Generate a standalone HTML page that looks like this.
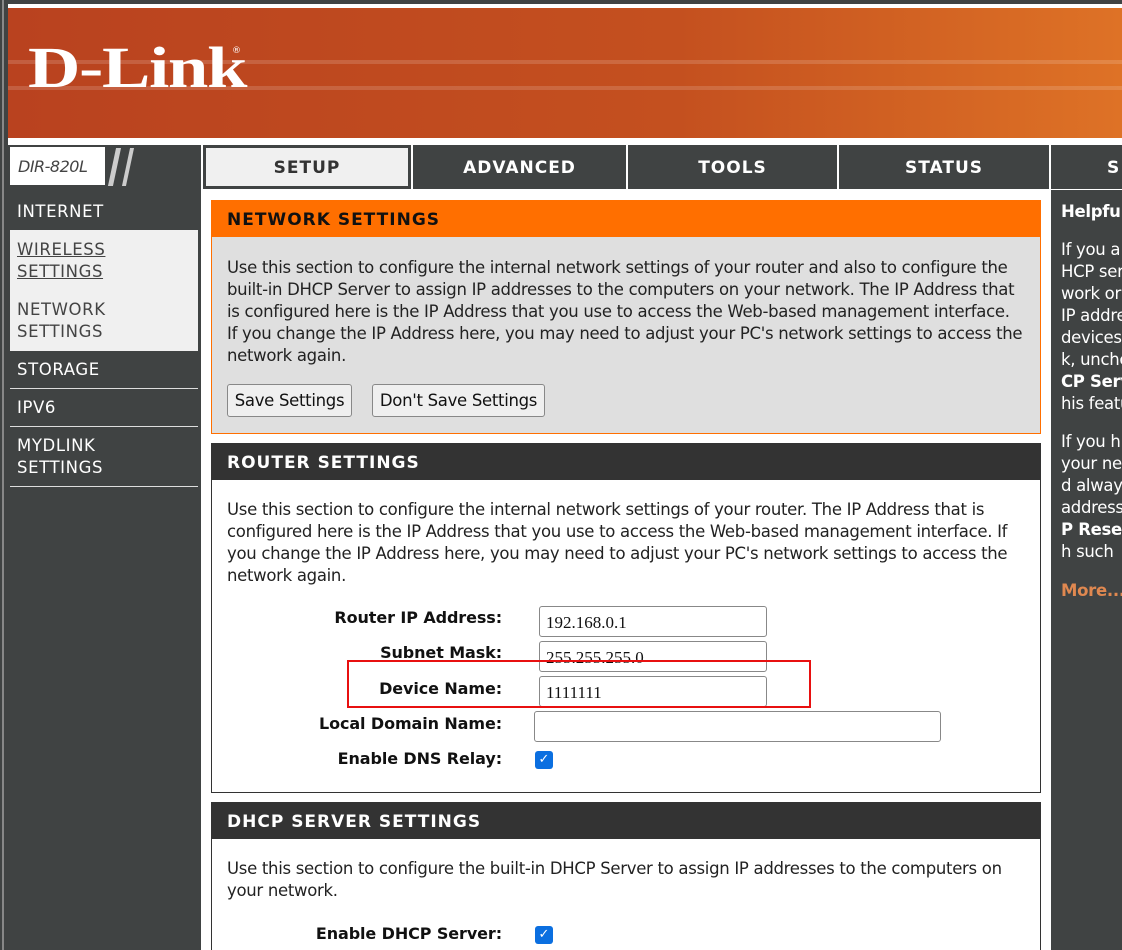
<!DOCTYPE html>
<html><head><style>
body{margin:0;width:1122px;height:950px;overflow:hidden;background:#fff;font-family:"DejaVu Sans","Liberation Sans",sans-serif;position:relative}
div,span{position:absolute;box-sizing:border-box}
.p{font-size:16.5px;line-height:22px;color:#222;white-space:nowrap;letter-spacing:-0.3px}
.tab{top:145px;height:44px;background:#404343;color:#fff;font-weight:bold;font-size:17px;letter-spacing:1px;text-align:center;line-height:46px}
.mi{left:10px;width:188px;color:#fff;font-size:16.5px;letter-spacing:0.6px;line-height:22px;padding-left:7px;border-bottom:1px solid #ddd}
.lbl{font-weight:bold;font-size:16px;color:#111;text-align:right;width:290px;left:212px;letter-spacing:-0.1px}
.inp{border:1px solid #888;border-radius:3px;height:31px;background:#fff;font-family:"Liberation Serif",serif;font-size:17px;line-height:31px;padding-left:6px;color:#111}
.cb{width:18px;height:18px;background:#0b6fe0;border-radius:3px;color:#fff;font-size:13px;line-height:18px;text-align:center;font-weight:bold}
.hd{font-weight:bold;font-size:17px;letter-spacing:1px;line-height:40px;padding-left:16px}
.btn{top:384px;height:33px;border:1px solid #888;border-radius:3px;background:#efefef;font-size:16.5px;line-height:31px;text-align:center;color:#111;letter-spacing:-0.3px}
.h{left:1061px;color:#fff;font-size:16.5px;line-height:22px;white-space:nowrap;letter-spacing:-0.3px}
</style></head><body>
<div style="left:0;top:0;width:1122px;height:4px;background:#404343"></div>
<div style="left:0;top:0;width:8px;height:950px;background:#404343"></div>
<div style="left:2px;top:0;width:2px;height:950px;background:#888"></div>
<div style="left:8px;top:8px;width:1114px;height:130px;background:linear-gradient(90deg,#b9421f 0%,#c4501f 60%,#de7226 100%)"></div>
<div style="left:8px;top:60px;width:1114px;height:4px;background:rgba(255,255,255,0.15)"></div>
<div style="left:8px;top:86px;width:1114px;height:4px;background:rgba(255,255,255,0.15)"></div>
<div style="left:28px;top:36px;color:#fff;font-family:'Liberation Serif',serif;font-weight:bold;font-size:58px;line-height:64px;letter-spacing:-1px;transform:scaleX(1.25);transform-origin:left center">D-Link</div>
<div style="left:232px;top:46px;color:#fff;font-size:9px">®</div>
<div style="left:8px;top:138px;width:1114px;height:7px;background:#fff"></div>
<div style="left:8px;top:145px;width:193px;height:805px;background:#404343"></div>
<div style="left:10px;top:147px;width:95px;height:38px;background:#fff;color:#444;font-style:italic;font-size:16px;line-height:40px;padding-left:8px;letter-spacing:-0.5px">DIR-820L</div>
<div style="left:112px;top:148px;width:5px;height:38px;background:#ccc;transform:skewX(-12deg)"></div>
<div style="left:126px;top:148px;width:4px;height:38px;background:#ccc;transform:skewX(-12deg)"></div>
<div class="tab" style="left:203px;width:208px;background:#404343;padding:3px"><div style="left:3px;top:3px;right:3px;bottom:3px;background:#f0f0f0;color:#333;line-height:40px">SETUP</div></div>
<div class="tab" style="left:413px;width:213px">ADVANCED</div>
<div class="tab" style="left:628px;width:209px">TOOLS</div>
<div class="tab" style="left:839px;width:210px">STATUS</div>
<div class="tab" style="left:1051px;width:71px;overflow:hidden;text-align:left;padding-left:56px">S</div>
<div class="mi" style="top:201px;border:none">INTERNET</div>
<div style="left:10px;top:230px;width:188px;height:121px;background:#f0f0f0"></div>
<div class="mi" style="top:239px;color:#444;text-decoration:underline;border:none">WIRELESS<br>SETTINGS</div>
<div class="mi" style="top:299px;color:#444;border:none">NETWORK<br>SETTINGS</div>
<div class="mi" style="top:359px;height:30px">STORAGE</div>
<div class="mi" style="top:397px;height:30px">IPV6</div>
<div class="mi" style="top:435px;height:52px">MYDLINK<br>SETTINGS</div>
<div style="left:1051px;top:190px;width:71px;height:760px;background:#404343"></div>
<div class="h" style="top:201px"><b>Helpful</b></div>
<div class="h" style="top:239px">If you a<br>HCP ser<br>work or<br>IP addre<br>devices<br>k, unche<br><b>CP Serv</b><br>his featu</div>
<div class="h" style="top:431px">If you h<br>your ne<br>d alway<br>address<br><b>P Rese</b><br>h such</div>
<div class="h" style="top:580px"><b style="color:#e08850">More...</b></div>
<div style="left:211px;top:200px;width:830px;height:234px;background:#dfdfdf;border:1px solid #ff6f00"></div>
<div class="hd" style="left:211px;top:200px;width:830px;height:37px;background:#ff6f00;color:#111">NETWORK SETTINGS</div>
<div class="p" style="left:227px;top:257px">Use this section to configure the internal network settings of your router and also to configure the<br>built-in DHCP Server to assign IP addresses to the computers on your network. The IP Address that<br>is configured here is the IP Address that you use to access the Web-based management interface.<br>If you change the IP Address here, you may need to adjust your PC's network settings to access the<br>network again.</div>
<div class="btn" style="left:227px;width:125px">Save Settings</div>
<div class="btn" style="left:372px;width:173px">Don't Save Settings</div>
<div style="left:211px;top:443px;width:830px;height:350px;border:1px solid #333"></div>
<div class="hd" style="left:211px;top:443px;width:830px;height:37px;background:#333;color:#fff">ROUTER SETTINGS</div>
<div class="p" style="left:227px;top:499px">Use this section to configure the internal network settings of your router. The IP Address that is<br>configured here is the IP Address that you use to access the Web-based management interface. If<br>you change the IP Address here, you may need to adjust your PC's network settings to access the<br>network again.</div>
<div class="lbl" style="top:608px">Router IP Address:</div>
<div class="inp" style="left:539px;top:606px;width:228px">192.168.0.1</div>
<div class="lbl" style="top:643px">Subnet Mask:</div>
<div class="inp" style="left:539px;top:641px;width:228px">255.255.255.0</div>
<div class="lbl" style="top:679px">Device Name:</div>
<div class="inp" style="left:539px;top:676px;width:228px">1111111</div>
<div style="left:347px;top:660px;width:464px;height:48px;border:2px solid #e81010"></div>
<div class="lbl" style="top:714px">Local Domain Name:</div>
<div class="inp" style="left:534px;top:711px;width:407px"></div>
<div class="lbl" style="top:749px">Enable DNS Relay:</div>
<div class="cb" style="left:535px;top:751px">✓</div>
<div style="left:211px;top:802px;width:830px;height:148px;border:1px solid #333;border-bottom:none"></div>
<div class="hd" style="left:211px;top:802px;width:830px;height:37px;background:#333;color:#fff">DHCP SERVER SETTINGS</div>
<div class="p" style="left:227px;top:858px">Use this section to configure the built-in DHCP Server to assign IP addresses to the computers on<br>your network.</div>
<div class="lbl" style="top:924px">Enable DHCP Server:</div>
<div class="cb" style="left:535px;top:926px">✓</div>
</body></html>
